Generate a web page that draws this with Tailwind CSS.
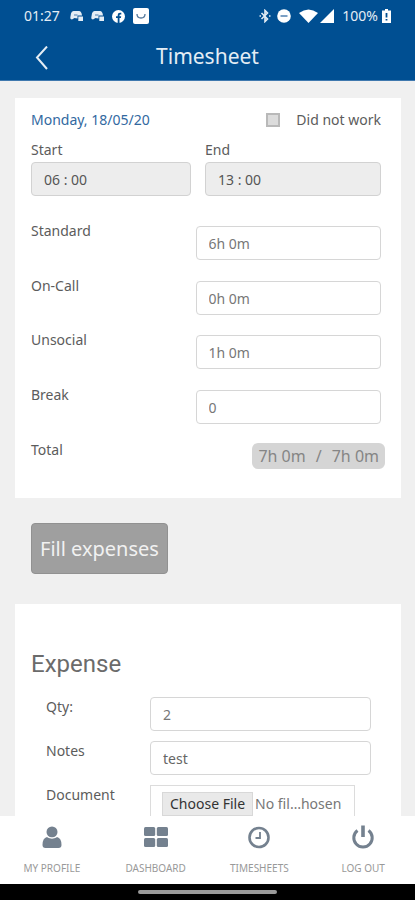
<!DOCTYPE html>
<html lang="en">
<head>
<meta charset="utf-8">
<meta name="viewport" content="width=device-width, initial-scale=1">
<title>Timesheet</title>
<script src="https://cdn.jsdelivr.net/npm/@tailwindcss/browser@4"></script>
</head>
<body class="flex h-screen flex-col overflow-hidden bg-[#f0f0f0] font-['Noto_Sans','Open_Sans',sans-serif] text-sm text-[#5c5c5c]">

<header class="shrink-0 border-b border-[#3f78ae] bg-[#004f92] text-[#e4edf5]">
  <div class="flex h-8 items-center justify-between pr-6 pl-6">
    <div class="flex items-center gap-2">
      <span class="w-[38px]">01:27</span>
      <svg class="h-3 w-[13px]" viewBox="0 0 13 12" fill="currentColor" aria-hidden="true"><path d="M3.500 1H9q2.500 0 3 4.500H7.500V8.500L4.500 8 2 9.500Q0 9.500 .3 7.500L1 3.500Q1.500 1 3.500 1Z"/><path d="M8.300 6.500H13V11H8.300Z"/><path d="M4 5h3.500" stroke="#4a7dae"/></svg>
      <svg class="h-3 w-[13px]" viewBox="0 0 13 12" fill="currentColor" aria-hidden="true"><path d="M3.500 1H9q2.500 0 3 4.500H7.500V8.500L4.500 8 2 9.500Q0 9.500 .3 7.500L1 3.500Q1.500 1 3.500 1Z"/><path d="M8.300 6.500H13V11H8.300Z"/><path d="M4 5h3.500" stroke="#4a7dae"/></svg>
      <svg class="size-[13px]" viewBox="0 0 13 13" aria-hidden="true"><circle cx="6.500" cy="6.500" r="6.500" fill="#fff"/><path d="M5.700 13V8H4V6.200h1.700V5Q5.700 2.700 8 2.700h1.300v1.700H8.300q-.8 0-.8.9v.9h1.700L8.900 8H7.500v5Z" fill="#004f92"/></svg>
      <svg class="size-4" viewBox="0 0 16 16" aria-hidden="true"><rect width="16" height="16" rx="2" fill="#fff"/><path d="M4 6q0 4 4 4t4-4" fill="none" stroke="#55789b" stroke-width="1.300"/></svg>
    </div>
    <div class="flex items-center">
      <svg class="mr-[6px] h-[14px] w-3" viewBox="0 0 12 14" fill="none" stroke="currentColor" stroke-width="1.600" aria-hidden="true"><path d="M2.500 4 8.500 10 6 12.500V1.500L8.500 4 2.500 10"/><path d="M.5 7h1.500M10 7h1.500"/></svg>
      <svg class="mr-2 size-[14px]" viewBox="0 0 14 14" aria-hidden="true"><circle cx="7" cy="7" r="6.800" fill="#fff"/><path d="M3.500 7h7" stroke="#7ba0c4" stroke-width="2"/></svg>
      <svg class="mr-[2px] h-[14px] w-[19px]" viewBox="0 0 19 14" fill="#fff" aria-hidden="true"><path d="M0 4Q9.500-3 19 4L9.500 14Z"/></svg>
      <svg class="mr-2 size-[14px]" viewBox="0 0 14 14" fill="#fff" aria-hidden="true"><path d="M14 0v14H0Z"/></svg>
      <span class="mr-1">100%</span>
      <svg class="h-[14px] w-[9px]" viewBox="0 0 9 14" aria-hidden="true"><path d="M3 0h3v1.500h3V14H0V1.500h3Z" fill="#fff"/><path d="M4.500 4v4.500M4.500 10v1.500" stroke="#004f92" stroke-width="1.800"/></svg>
    </div>
  </div>
  <div class="relative flex h-12 items-center justify-center">
    <button type="button" aria-label="Back" class="absolute left-[30px] flex size-6 items-center justify-center pt-[3px]">
      <svg class="h-6 w-4" viewBox="0 0 16 24" fill="none" stroke="currentColor" stroke-width="2" aria-hidden="true"><path d="M13 .5 3 11.500 13 23"/></svg>
    </button>
    <h1 class="text-[21px] leading-8">Timesheet</h1>
  </div>
</header>

<main class="min-h-0 flex-1 overflow-hidden pt-[17px] pr-[14px] pl-[15px]">
  <section class="bg-white pr-5 pb-[29px] pl-4">
    <div class="flex items-center justify-between pt-[10px]">
      <h2 class="leading-6 text-[#32699f]">Monday, 18/05/20</h2>
      <label class="flex items-center gap-4 leading-6"><input type="checkbox" class="size-[14px] appearance-none border-2 border-[#b9b9b9] bg-[#dcdcdc]">Did not work</label>
    </div>
    <div class="mt-[6px] grid grid-cols-[160fr_176fr] gap-x-[14px]">
      <label for="start" class="leading-6">Start</label>
      <label for="end" class="leading-6">End</label>
      <input id="start" value="06 : 00" readonly class="h-[34px] w-full rounded border border-[#d2d2d2] bg-[#ededed] px-3 text-[#555]">
      <input id="end" value="13 : 00" readonly class="h-[34px] w-full rounded border border-[#d2d2d2] bg-[#ededed] px-3 text-[#555]">
    </div>
    <div class="mt-[23px] flex h-[55px] justify-between"><label for="std" class="leading-6">Standard</label><input id="std" value="6h 0m" class="mt-[7px] h-[34px] w-[53%] rounded border border-[#d6d6d6] px-3 text-[#777]"></div>
    <div class="flex h-[54px] justify-between"><label for="call" class="leading-6">On-Call</label><input id="call" value="0h 0m" class="mt-[7px] h-[34px] w-[53%] rounded border border-[#d6d6d6] px-3 text-[#777]"></div>
    <div class="flex h-[55px] justify-between"><label for="uns" class="leading-6">Unsocial</label><input id="uns" value="1h 0m" class="mt-[7px] h-[34px] w-[53%] rounded border border-[#d6d6d6] px-3 text-[#777]"></div>
    <div class="flex h-[55px] justify-between"><label for="brk" class="leading-6">Break</label><input id="brk" value="0" class="mt-[7px] h-[34px] w-[53%] rounded border border-[#d6d6d6] px-3 text-[#777]"></div>
    <div class="flex justify-between"><span class="leading-6">Total</span><output class="mt-[5px] -mr-1 flex h-[26px] gap-[10px] rounded-md bg-[#d5d5d5] px-[6px] text-base leading-[26px] text-[#858585]"><span>7h 0m</span><span>/</span><span>7h 0m</span></output></div>
  </section>

  <button type="button" class="mt-[25px] ml-4 h-[51px] rounded border border-[#919191] bg-[#9f9f9f] px-2 text-xl text-[#f1f1f1]">Fill expenses</button>

  <section class="mt-[30px] bg-white pr-[30px] pl-4">
    <h2 class="pt-11 font-['Roboto',sans-serif] text-2xl text-[#6b6b6b]">Expense</h2>
    <div class="mt-[17px] grid grid-cols-[104px_1fr] gap-y-[10px] pl-[15px]">
      <label for="qty" class="leading-5">Qty:</label><input id="qty" value="2" class="h-[34px] w-full rounded border border-[#d6d6d6] px-3 text-[#777]">
      <label for="notes" class="leading-5">Notes</label><input id="notes" value="test" class="h-[34px] w-full rounded border border-[#d6d6d6] px-3 text-[#666]">
      <label for="doc" class="leading-5">Document</label>
      <div class="mr-4 h-[46px] border border-[#dcdcdc] pt-[6px] pr-[9px] pl-[11px]"><input id="doc" type="file" class="w-full text-[#777] file:mr-[2px] file:h-6 file:border file:border-[#d8d8d8] file:bg-[#e9e9e9] file:px-[7px] file:text-[#333]"></div>
    </div>
  </section>
</main>

<nav class="grid h-[68px] shrink-0 grid-cols-4 bg-white text-[10px] text-[#999]">
  <a href="#profile" class="flex flex-col items-center gap-3 pt-[9px]">
    <svg class="size-6" viewBox="0 0 24 24" fill="#74818f" aria-hidden="true"><circle cx="12" cy="7" r="5.500"/><path d="M7 12q5 3 10 0 4.500 1 4.500 8 0 3-3 3h-13q-3 0-3-3Q2.500 13 7 12Z"/><path d="M7.500 11.800q4.500 2.600 9 0" fill="none" stroke="#fff" stroke-width=".8"/></svg>
    <span class="leading-[14px]">MY PROFILE</span>
  </a>
  <a href="#dashboard" class="flex flex-col items-center gap-3 pt-[9px]">
    <svg class="size-6" viewBox="0 0 24 24" fill="#74818f" aria-hidden="true"><rect x="0" y="2" width="11.200" height="9" rx="1.500"/><rect x="12.800" y="2" width="11.200" height="9" rx="1.500"/><rect x="0" y="13" width="11.200" height="9" rx="1.500"/><rect x="12.800" y="13" width="11.200" height="9" rx="1.500"/></svg>
    <span class="leading-[14px]">DASHBOARD</span>
  </a>
  <a href="#timesheets" class="flex flex-col items-center gap-3 pt-[9px]">
    <svg class="size-6" viewBox="0 0 24 24" fill="none" stroke="#74818f" aria-hidden="true"><circle cx="12" cy="12.500" r="9.500" stroke-width="2.600"/><path d="M13 7v6H8.500" stroke-width="1.800"/></svg>
    <span class="leading-[14px]">TIMESHEETS</span>
  </a>
  <a href="#logout" class="flex flex-col items-center gap-3 pt-[9px]">
    <svg class="size-6" viewBox="0 0 24 24" fill="none" stroke="#74818f" stroke-width="3" aria-hidden="true"><path d="M6.500 5.500a9.200 9.200 0 1 0 11 0"/><path d="M12 .5v11.500" stroke-width="3.600"/></svg>
    <span class="leading-[14px]">LOG OUT</span>
  </a>
</nav>
<footer class="flex h-4 shrink-0 items-center justify-center bg-black"><div class="h-1 w-1/3 rounded-full bg-[#9a9a9a]"></div></footer>
</body>
</html>
